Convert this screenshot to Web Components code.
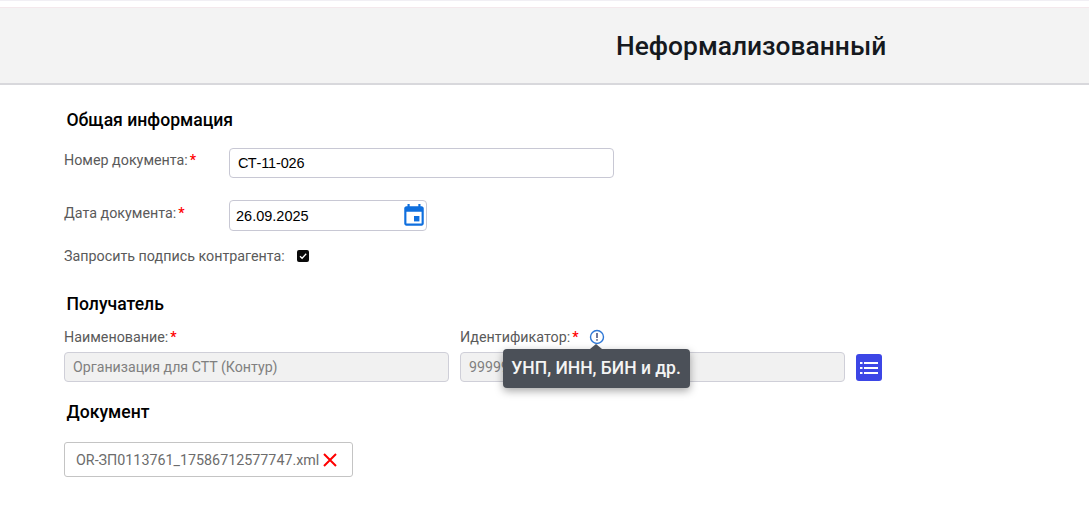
<!DOCTYPE html>
<html lang="ru"><head><meta charset="utf-8"><title>Неформализованный</title>
<style>
html,body{margin:0;padding:0;background:#fff;font-family:Roboto,"Liberation Sans",sans-serif}
body{width:1089px;height:524px;overflow:hidden}
</style></head><body>
<doc-header>Неформализованный</doc-header>
<doc-form></doc-form>
<script>
function def(name,html,setup){customElements.define(name,class extends HTMLElement{constructor(){super();this.attachShadow({mode:'open'}).innerHTML=html;if(setup)setup(this)}})}
def('doc-header',`<style>
:host{display:block;box-sizing:border-box;height:85px;padding-top:6px;background:#fff;border-top:1px solid #f1eff4}
.bar{box-sizing:border-box;height:78px;background:#f3f3f3;border-top:1px solid #f4e8ec;border-bottom:2px solid #d8d8dc;display:flex;align-items:center;padding:1px 0 0 616px}
.t{font:500 26.400px/32px Roboto,sans-serif;color:#15191e;white-space:nowrap}
</style><div class="bar"><span class="t"><slot></slot></span></div>`);
def('section-title',`<style>
:host{display:block;font:500 17.600px/20px Roboto,sans-serif;color:#000;padding-left:2.500px}
</style><slot></slot>`);
def('field-label',`<style>
:host{display:inline-block;font:400 14.300px/18px Roboto,sans-serif;color:#5a5a5a;white-space:nowrap}
.r{color:#f00;font-size:14.300px;font-weight:500;margin-left:2px}
</style><slot></slot><span class="r">*</span>`);
def('text-box',`<style>
:host{display:flex;align-items:center;box-sizing:border-box;border:1px solid #c8c8d4;border-radius:4px;background:#fff;font:400 14.500px/18px "Liberation Sans",Arial,sans-serif;color:#000;white-space:nowrap;overflow:hidden}
:host([disabled]){background:#f1f1f1;color:#808080;font:400 14.200px/18px Roboto,sans-serif;border-color:#cfcfd8}
</style><slot></slot>`);
def('cal-icon',`<style>:host{display:block;width:26px;height:26px}svg{display:block}</style>
<svg width="26" height="26" viewBox="0 0 24 24"><path fill="#0f6fde" d="M19 3h-1V1h-2v2H8V1H6v2H5C3.900 3 3 3.900 3 5v14c0 1.100.9 2 2 2h14c1.100 0 2-.9 2-2V5c0-1.100-.9-2-2-2zm0 16H5V8h14v11z"/><rect x="12" y="12" width="5" height="5" fill="#0f6fde"/></svg>`);
def('info-tip',`<style>
:host{position:relative;display:inline-block;width:16px;height:16px}
svg{display:block}
.tip{position:absolute;left:-86px;top:20px;width:187px;height:39px;box-sizing:border-box;background:#4b5058;color:#f4f4f4;border-radius:4px;box-shadow:0 3px 8px rgba(0,0,0,.35);font:500 17.500px/38px Roboto,sans-serif;text-align:center;white-space:nowrap;z-index:5}
.tip::before{content:"";position:absolute;left:87px;top:-5px;border:6px solid transparent;border-top:0;border-bottom:5px solid #4b5058}
</style><svg width="16" height="16" viewBox="0 0 16 16"><circle cx="8" cy="8" r="6.500" fill="none" stroke="#2f78d6" stroke-width="1.400"/><rect x="7.300" y="4" width="1.400" height="5" fill="#333f70"/><rect x="7.300" y="10.200" width="1.400" height="1.500" fill="#333f70"/></svg><div class="tip">УНП, ИНН, БИН и др.</div>`);
def('list-button',`<style>
:host{width:26px;height:27px;background:#3c46e6;border-radius:3px;display:flex;align-items:center;justify-content:center}
</style><svg width="18" height="14" viewBox="0 0 18 14" fill="#fff"><rect x="0" y="1" width="2.500" height="2"/><rect x="4" y="1" width="14" height="2"/><rect x="0" y="6" width="2.500" height="2"/><rect x="4" y="6" width="14" height="2"/><rect x="0" y="11" width="2.500" height="2"/><rect x="4" y="11" width="14" height="2"/></svg>`);
def('check-box',`<style>
:host{display:block;width:12px;height:12px;background:#0a0a0a;border-radius:2px}
svg{display:block}
</style><svg width="12" height="12" viewBox="0 0 12 12"><path d="M3 6.200l2.100 2.100L9.200 3.800" fill="none" stroke="#fff" stroke-width="1.300"/></svg>`);
def('file-chip',`<style>
:host{display:flex;align-items:center;box-sizing:border-box;width:289px;height:35px;border:1px solid #c4c4c4;border-radius:3px;padding-left:11px;font:400 14.300px/18px Roboto,sans-serif;color:#6c6c6c;white-space:nowrap}
svg{margin-left:4px;display:block}
</style><slot></slot><svg width="14" height="14" viewBox="0 0 14 14"><path d="M1 1l12 12M13 1L1 13" stroke="#f00" stroke-width="2" fill="none"/></svg>`);
def('doc-form',`<style>
:host{display:block;padding:25px 0 0 64px}
.row{display:flex;align-items:flex-start}
.lab{width:165px}
.date{display:flex;justify-content:space-between;width:198px;height:31px;padding:0 0 0 6px;box-sizing:border-box}
.cols{display:flex}
.col{width:385px;margin-right:11px}
.col text-box{height:30px;padding-left:8px;margin-top:6px}
.lab2{display:flex;align-items:center;height:18px;gap:10px}
</style>
<section-title>Общая информация</section-title>
<div class="row" style="margin-top:18px"><field-label class="lab" style="margin-top:3px">Номер документа:</field-label><text-box style="width:385px;height:30px;padding-left:8px;letter-spacing:-.15px">СТ-11-026</text-box></div>
<div class="row" style="margin-top:22px"><field-label class="lab" style="margin-top:4px">Дата документа:</field-label><text-box class="date">26.09.2025<cal-icon style="margin-right:-1px"></cal-icon></text-box></div>
<div class="row" style="margin-top:16px;align-items:center;font:400 14.300px/18px Roboto,sans-serif;color:#5a5a5a"><span style="width:233px;white-space:nowrap">Запросить подпись контрагента:</span><check-box></check-box></div>
<section-title style="margin-top:29px">Получатель</section-title>
<div class="cols" style="margin-top:14px">
<div class="col"><div class="lab2"><field-label>Наименование:</field-label></div><text-box disabled>Организация для СТТ (Контур)</text-box></div>
<div class="col"><div class="lab2"><field-label>Идентификатор:</field-label><info-tip></info-tip></div><text-box disabled>9999999999</text-box></div>
<list-button style="margin-top:26px"></list-button>
</div>
<section-title style="margin-top:20px">Документ</section-title>
<file-chip style="margin-top:20px">OR-ЗП0113761_17586712577747.xml</file-chip>`);
</script>
</body></html>
